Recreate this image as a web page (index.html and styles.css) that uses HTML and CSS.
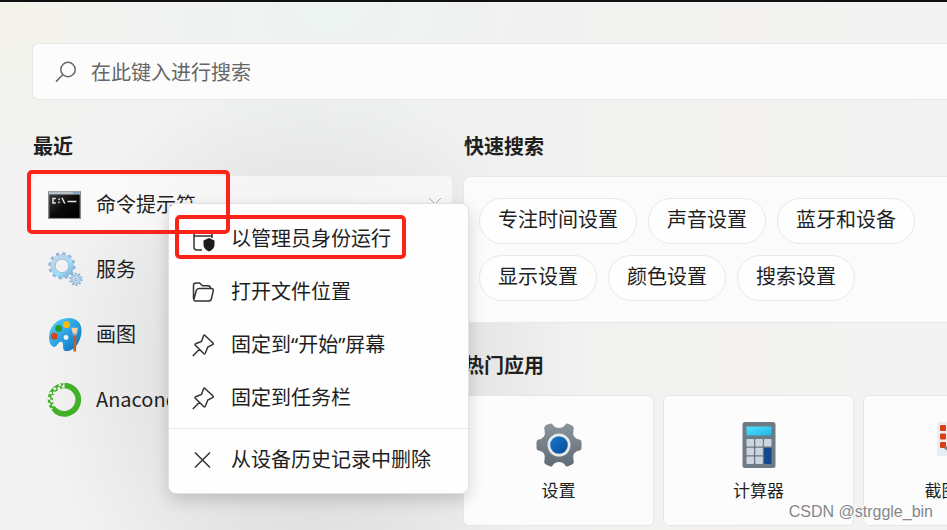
FILE: index.html
```html
<!DOCTYPE html>
<html lang="zh-CN">
<head>
  <meta charset="UTF-8">
  <title>搜索</title>
  <meta name="viewport" content="width=device-width, initial-scale=1.0">
  <link rel="stylesheet" href="styles.css">
</head>
<body>

<div class="panel">
  <label class="search-box">
    <svg class="search-icon" viewBox="0 0 22 22"><circle cx="13" cy="8.5" r="7.2"/><path d="M7.8 13.8 L1 20.6"/></svg>
    <input type="text" placeholder="在此键入进行搜索" aria-label="在此键入进行搜索">
  </label>

  <div class="columns">
    <section class="recent">
      <h2>最近</h2>
      <ul class="recent-list">
        <li>
          <a class="recent-item selected" href="#">
            <svg class="app-icon" viewBox="0 0 32 32">
              <defs><linearGradient id="cmd" x1="0" y1="0" x2="1" y2="1"><stop offset="0" stop-color="#3b3b3b"/><stop offset=".5" stop-color="#0a0a0a"/><stop offset="1" stop-color="#000"/></linearGradient></defs>
              <rect x="0" y="3" width="32" height="27" fill="#85898c"/>
              <rect x="1" y="3.6" width="30" height="2.4" fill="#b9c0c6"/>
              <rect x="24" y="3.8" width="6.5" height="1.8" fill="#7e9fc0"/>
              <rect x="1.3" y="6.5" width="29.4" height="22.5" fill="url(#cmd)"/>
              <g fill="none" stroke="#e6e6e6" stroke-width="1.4"><path d="M7.6 10.2H4.8V14.6H7.6M13.5 9.5L16.3 15M19 13H27.5"/></g>
              <rect x="10" y="10.2" width="1.5" height="1.5" fill="#e6e6e6"/><rect x="10" y="13.2" width="1.5" height="1.5" fill="#e6e6e6"/>
            </svg>
            <span>命令提示符</span>
            <svg class="remove-icon" viewBox="0 0 12 12"><path d="M0 0L12 12M12 0L0 12"/></svg>
          </a>
        </li>
        <li>
          <a class="recent-item" href="#">
            <svg class="app-icon" viewBox="0 0 32 32">
              <defs><linearGradient id="cog" x1="0" y1="0" x2="1" y2="1"><stop offset="0" stop-color="#c6d9ec"/><stop offset=".35" stop-color="#b4d3ee"/><stop offset=".6" stop-color="#9ce4fb"/><stop offset="1" stop-color="#7fb0da"/></linearGradient></defs>
              <circle cx="13.5" cy="12.5" r="9" fill="none" stroke="url(#cog)" stroke-width="5"/>
              <circle cx="13.5" cy="12.5" r="12" fill="none" stroke="#94b4d4" stroke-width="2.4" stroke-dasharray="3.2 3.083"/>
              <circle cx="13.5" cy="12.5" r="6.5" fill="none" stroke="#8fb2d4" stroke-width=".7"/>
              <circle cx="27" cy="25.5" r="3.9" fill="#e7edf2" stroke="#a5c9e6" stroke-width="2.6"/>
              <circle cx="27" cy="25.5" r="5.7" fill="none" stroke="#86aed0" stroke-width="1.5" stroke-dasharray="1.79 1.79"/>
              <circle cx="27" cy="25.5" r="1.3" fill="none" stroke="#8fb2d0"/>
            </svg>
            <span>服务</span>
          </a>
        </li>
        <li>
          <a class="recent-item" href="#">
            <svg class="app-icon" viewBox="0 0 32 32">
              <defs><linearGradient id="paint" x1="0" y1="0" x2="1" y2="1"><stop offset="0" stop-color="#5cd6f8"/><stop offset=".5" stop-color="#2ba2e4"/><stop offset="1" stop-color="#0868bd"/></linearGradient></defs>
              <path fill="url(#paint)" fill-rule="evenodd" d="M20 0C9 0 1 8 1 19C1 24 3 28 6 28C9 28 9.5 23 12.5 23C17 23 12 32 18 32C26 32 32.5 22 32.5 12C32.5 5 28 0 20 0ZM17.5 16.5a2.4 2.4 0 1 1 0 4.8a2.4 2.4 0 1 1 0-4.8Z"/>
              <circle cx="18" cy="6.5" r="3.3" fill="#f9bd12"/><circle cx="10.3" cy="10.2" r="3.3" fill="#269b27"/><circle cx="6" cy="17.6" r="3.3" fill="#d5471b"/>
              <path d="M22.5 9.5H29L28 15H24Z" fill="#efd2a8"/><path d="M24 14.5H27.8V17H24Z" fill="#a9b0b5"/><path d="M24.2 17H27.6L27.2 32.5H24.7Z" fill="#b86521"/>
            </svg>
            <span>画图</span>
          </a>
        </li>
        <li>
          <a class="recent-item" href="#">
            <svg class="app-icon" viewBox="0 0 32 32">
              <path d="M16 2.5A13.7 13.7 0 1 1 7.5 27.2" fill="none" stroke="#42b029" stroke-width="5.6"/>
              <path d="M8.3 27.6A13.7 13.7 0 0 1 15 2.5" fill="none" stroke="#42b029" stroke-width="5"/>
              <g fill="#eef0ef"><circle cx="14.5" cy="3.5" r="1.2"/><circle cx="11.4" cy="2" r="1.3"/><circle cx="10.5" cy="5.4" r="1.5"/><circle cx="6.5" cy="5.5" r="1.5"/><circle cx="6.3" cy="9.5" r="1.5"/><circle cx="2.6" cy="9.8" r="1.4"/><circle cx="4.7" cy="13" r="1.5"/><circle cx="1" cy="15" r="1.4"/><circle cx="3.6" cy="17.5" r="1.5"/><circle cx="1" cy="20.5" r="1.3"/><circle cx="5.2" cy="21.5" r="1.3"/><circle cx="3.5" cy="25" r="1"/></g>
            </svg>
            <span>Anaconda</span>
          </a>
        </li>
      </ul>
    </section>

    <section class="explore">
      <h2>快速搜索</h2>
      <div class="quick-card">
        <div class="chip-row">
          <button class="chip">专注时间设置</button>
          <button class="chip">声音设置</button>
          <button class="chip">蓝牙和设备</button>
        </div>
        <div class="chip-row">
          <button class="chip">显示设置</button>
          <button class="chip">颜色设置</button>
          <button class="chip">搜索设置</button>
        </div>
      </div>

      <h2>热门应用</h2>
      <div class="tiles">
        <a class="tile" href="#">
          <svg class="tile-icon" viewBox="0 0 46 46">
            <defs>
              <linearGradient id="gear" x1="0" y1="0" x2="0" y2="1"><stop offset="0" stop-color="#8a949b"/><stop offset="1" stop-color="#5f6b75"/></linearGradient>
              <linearGradient id="hub" x1="0" y1="0" x2="1" y2="1"><stop offset="0" stop-color="#1479d0"/><stop offset="1" stop-color="#094a93"/></linearGradient>
            </defs>
            <path fill="url(#gear)" d="M10 3L14.5 1.5Q16 1.2 17 3Q19 6 23 6Q27 6 29 3Q30 1.2 31.5 1.5L36 3.5Q38.5 5 37.5 8Q36.5 12 38 14.5Q40 17 43.5 17.5Q45.5 18 45.5 20V26Q45.5 28 43.5 28.5Q40 29 38 31.5Q36.5 34 37.5 38Q38.5 41 36 42.5L31.5 44.5Q30 45 29 43Q27 40 23 40Q19 40 17 43Q16 45 14.5 44.5L10 42.5Q7.5 41 8.5 38Q9.5 34 8 31.5Q6 29 2.5 28.5Q.5 28 .5 26V20Q.5 18 2.5 17.5Q6 17 8 14.5Q9.5 12 8.5 8Q7.5 5 10 3Z"/>
            <circle cx="23" cy="23" r="11.5" fill="#e6e9eb"/><circle cx="23" cy="23" r="8.8" fill="url(#hub)"/>
          </svg>
          <span>设置</span>
        </a>
        <a class="tile" href="#">
          <svg class="tile-icon" viewBox="0 0 46 46">
            <defs><linearGradient id="screen" x1="0" y1="0" x2="1" y2="1"><stop offset="0" stop-color="#52e1fc"/><stop offset="1" stop-color="#20b3ec"/></linearGradient></defs>
            <rect x="6.5" y="0" width="33" height="46" rx="2.5" fill="#6e7a84"/>
            <rect x="10.5" y="4.5" width="25" height="9" rx=".6" fill="url(#screen)"/>
            <g fill="#cdd4de"><rect x="10.5" y="17" width="7.5" height="7.5" rx=".8"/><rect x="19.3" y="17" width="7.5" height="7.5" rx=".8"/><rect x="28" y="17" width="7.5" height="7.5" rx=".8"/><rect x="10.5" y="25.7" width="7.5" height="7.5" rx=".8"/><rect x="19.3" y="25.7" width="7.5" height="7.5" rx=".8"/><rect x="10.5" y="34.4" width="7.5" height="7.5" rx=".8"/><rect x="19.3" y="34.4" width="7.5" height="7.5" rx=".8"/></g>
            <rect x="28" y="25.7" width="7.5" height="16.2" rx=".8" fill="#14488d"/>
          </svg>
          <span>计算器</span>
        </a>
        <a class="tile" href="#">
          <svg class="tile-icon" viewBox="0 0 46 46">
            <rect x="1" y="0" width="44" height="34" rx="2" fill="#e8edf1"/>
            <g fill="#d9410f"><rect x="4" y="3" width="6" height="6" rx="1"/><rect x="13" y="3" width="6" height="6" rx="1"/><rect x="22" y="3" width="6" height="6" rx="1"/><rect x="4" y="11.5" width="6" height="6" rx="1"/><rect x="4" y="20" width="6" height="6" rx="1"/></g>
            <path d="M9 25L32 44" stroke="#77828b" stroke-width="3"/>
          </svg>
          <span>截图工具</span>
        </a>
      </div>
    </section>
  </div>

  <!-- right-click menu of the first recent item -->
  <div class="context-menu">
    <button class="menu-item">
      <svg class="menu-icon" viewBox="0 0 22 22"><path d="M10 22H5Q2 22 2 19V7Q2 4 5 4H17Q20 4 20 7V10M2 8H20"/><path d="M17 10L22.5 12.5V16.5Q22.5 21 17 23.5Q11.5 21 11.5 16.5V12.5Z" fill="#1d1d1d" stroke="none"/></svg>
      <span>以管理员身份运行</span>
    </button>
    <button class="menu-item">
      <svg class="menu-icon" viewBox="0 0 22 22"><path d="M1.5 18V4.5Q1.5 2 4 2H7.5L10.5 4.8H16Q18.5 4.8 18.5 7.5M2 18L4.3 9.5Q4.8 7.5 7 7.5H19.5Q21.7 7.5 21.2 9.8L19.5 17.5Q19 20 16.5 20H3.5Q1.5 20 2 18Z"/></svg>
      <span>打开文件位置</span>
    </button>
    <button class="menu-item">
      <svg class="menu-icon" viewBox="0 0 22 22"><path d="M.8 22L7.5 15.2M12.7 1.2L21 9Q21.8 10 20.5 10.7L15.8 13L13.3 19.2Q12.7 20.5 11.7 19.5L3.3 11.2Q2.5 10.2 3.7 9.8L9.5 7.5L11.5 2Q12 .7 12.7 1.2Z"/></svg>
      <span>固定到“开始”屏幕</span>
    </button>
    <button class="menu-item">
      <svg class="menu-icon" viewBox="0 0 22 22"><path d="M.8 22L7.5 15.2M12.7 1.2L21 9Q21.8 10 20.5 10.7L15.8 13L13.3 19.2Q12.7 20.5 11.7 19.5L3.3 11.2Q2.5 10.2 3.7 9.8L9.5 7.5L11.5 2Q12 .7 12.7 1.2Z"/></svg>
      <span>固定到任务栏</span>
    </button>
    <hr>
    <button class="menu-item">
      <svg class="menu-icon" viewBox="0 0 22 22"><path d="M3 3.5L18 18.5M18 3.5L3 18.5"/></svg>
      <span>从设备历史记录中删除</span>
    </button>
  </div>

  <div class="mark mark-app"></div>
  <div class="mark mark-admin"></div>
  <div class="watermark">CSDN @strggle_bin</div>
</div>

</body>
</html>
```

FILE: styles.css
```css
* {
  box-sizing: border-box;
}

body {
  margin: 0;
  font-family: "Noto Sans CJK SC", sans-serif;
  font-size: 20px;
  line-height: 28px;
  color: #1f1f1f;
}

.panel {
  position: relative;
  min-height: 100vh;
  padding: 41px 0 4px 32px;
  overflow: hidden;
  border-top: 2px solid #111;
  background:
    radial-gradient(ellipse 270px 300px at 310px 370px, rgba(0, 0, 0, 0.07) 45%, rgba(0, 0, 0, 0)),
    radial-gradient(circle at 0 0, #f4f3ea, rgba(244, 243, 234, 0) 160px),
    radial-gradient(ellipse at 35% 0, #edf4f2, rgba(237, 244, 242, 0) 200px),
    linear-gradient(to right, #f3f3f3, #f1f1f1 25%, #f1f1f1 50%, #f3f2f0 75%, #f3f3f3);
}

.search-box {
  display: flex;
  align-items: center;
  gap: 14px;
  height: 57px;
  padding-left: 22px;
  background: #fcfcfc;
  border: 1px solid #e6e7e7;
  border-right: none;
  border-radius: 6px 0 0 6px;
}

.search-icon {
  width: 22px;
  height: 22px;
  fill: none;
  stroke: #666;
  stroke-width: 1.5;
}

.search-box input {
  flex: 1;
  padding: 0;
  border: none;
  outline: none;
  background: none;
  font: inherit;
}

.search-box input::placeholder {
  color: #666;
  opacity: 1;
}

.columns {
  display: grid;
  grid-template-columns: 420px 1fr;
  gap: 11px;
  margin-top: 32px;
}

.explore {
  min-width: 0;
}

h2 {
  margin: 0 0 16px;
  padding-left: 1px;
  font-size: 20px;
  line-height: 28px;
  font-weight: 700;
}

.recent-list {
  display: flex;
  flex-direction: column;
  gap: 9px;
  margin: 0;
  padding: 0;
  list-style: none;
}

.recent-item {
  display: flex;
  align-items: center;
  gap: 15px;
  height: 56px;
  padding: 0 11px 0 16px;
  border-radius: 5px;
  color: inherit;
  text-decoration: none;
}

.recent-item.selected {
  background: rgba(255, 255, 255, 0.6);
}

.app-icon {
  width: 33px;
  height: 33px;
  overflow: visible;
}

.remove-icon {
  width: 12px;
  height: 12px;
  margin-left: auto;
  stroke: #aaa;
}

.quick-card {
  display: flex;
  flex-direction: column;
  gap: 11px;
  margin-bottom: 28px;
  padding: 21px 0 21px 15px;
  background: #fbfbfb;
  border: 1px solid #e8e8e8;
  border-right: none;
  border-radius: 8px 0 0 8px;
}

.chip-row {
  display: flex;
  gap: 11px;
}

.chip {
  height: 46px;
  padding: 0 18px 4px;
  background: #fefefe;
  border: 1px solid #e9e9e9;
  border-radius: 23px;
  font: inherit;
  color: inherit;
  white-space: nowrap;
}

.tiles {
  display: grid;
  grid-template-columns: repeat(3, 191px);
  gap: 9px;
}

.tile {
  display: flex;
  flex-direction: column;
  align-items: center;
  gap: 10px;
  height: 131px;
  padding-top: 26px;
  background: #fcfcfc;
  border: 1px solid #e6e6e6;
  border-radius: 6px;
  font-size: 17px;
  line-height: 24px;
  color: inherit;
  text-decoration: none;
}

.tile-icon {
  width: 46px;
  height: 46px;
}

.context-menu {
  position: absolute;
  left: 168px;
  top: 201px;
  width: 301px;
  padding: 8px 0 7px;
  background: #fefefe;
  border: 1px solid #e2e2e2;
  border-radius: 8px;
  box-shadow: 0 6px 16px rgba(0, 0, 0, 0.16);
}

.menu-item {
  display: flex;
  align-items: center;
  gap: 17px;
  width: 100%;
  height: 53px;
  padding: 0 0 0 23px;
  border: none;
  background: none;
  font: inherit;
  font-family: "Noto Sans", "Noto Sans CJK SC", sans-serif;
  color: inherit;
}

.menu-icon {
  width: 22px;
  height: 22px;
  overflow: visible;
  fill: none;
  stroke: #333;
  stroke-width: 1.5;
}

.context-menu hr {
  margin: 4px 0;
  border: none;
  border-top: 1px solid #e8e8e8;
}

.mark {
  position: absolute;
  border: 4px solid #fb2418;
  border-radius: 5px;
}

.mark-app {
  left: 27px;
  top: 168px;
  width: 203px;
  height: 64px;
}

.mark-admin {
  left: 175px;
  top: 213px;
  width: 231px;
  height: 44px;
}

.watermark {
  position: absolute;
  right: 14px;
  bottom: 8px;
  font-family: "Liberation Sans", Arial, sans-serif;
  font-size: 16px;
  line-height: 20px;
  color: #85878a;
  text-shadow: -1px -1px 0 #fff;
}
```
